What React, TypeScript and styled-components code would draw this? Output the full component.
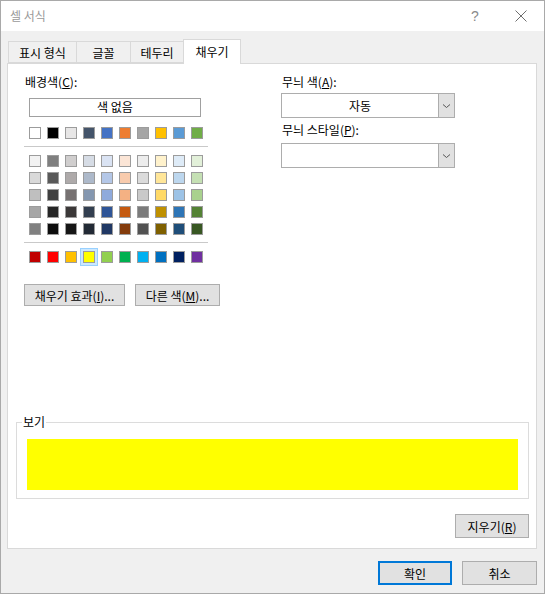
import React from 'react';
import styled, { createGlobalStyle } from 'styled-components';

const GlobalStyle = createGlobalStyle`
	html, body {
		margin: 0;
		padding: 0;
		background: #ffffff;
	}
	body {
		font-family: "Noto Sans CJK KR", "Noto Sans", "Liberation Sans", sans-serif;
		font-size: 12px;
		color: #000000;
	}
	* {
		box-sizing: border-box;
	}
`;

const Window = styled.div`
	width: 545px;
	height: 594px;
	border: 1px solid #a9a9a9;
	background: #f0f0f0;
	display: flex;
	flex-direction: column;
`;

const TitleBar = styled.div`
	height: 30px;
	background: #ffffff;
	display: flex;
	align-items: center;
	justify-content: space-between;
	padding-left: 9px;
`;

const Title = styled.span`
	color: #9a9a9a;
	font-size: 12px;
	line-height: 16px;
`;

const CaptionButtons = styled.div`
	display: flex;
	height: 100%;
`;

const CaptionButton = styled.div`
	width: 46px;
	height: 100%;
	display: flex;
	align-items: center;
	justify-content: center;
	color: #8a8a8a;
	font-family: "Liberation Sans", sans-serif;
	font-size: 14px;
`;

const Body = styled.div`
	padding: 0 7px 0 6px;
	display: flex;
	flex-direction: column;
`;

const TabStrip = styled.div`
	margin-top: 8px;
	margin-left: 1px;
	height: 24px;
	display: flex;
	align-items: flex-end;
`;

const Tab = styled.div<{ $w: number; $active?: boolean }>`
	position: relative;
	z-index: ${(p) => (p.$active ? 2 : 1)};
	width: ${(p) => p.$w}px;
	height: ${(p) => (p.$active ? 25 : 22)}px;
	margin-left: -1px;
	margin-bottom: ${(p) => (p.$active ? -1 : 0)}px;
	background: ${(p) => (p.$active ? '#ffffff' : '#f0f0f0')};
	border: 1px solid #d9d9d9;
	border-bottom: ${(p) => (p.$active ? 'none' : '1px solid #d9d9d9')};
	display: flex;
	align-items: center;
	justify-content: center;
	padding-bottom: ${(p) => (p.$active ? 2 : 0)}px;
	font-size: 12px;
	&:first-child {
		margin-left: 0;
	}
`;

const Panel = styled.div`
	position: relative;
	z-index: 0;
	height: 486px;
	background: #ffffff;
	border: 1px solid #d9d9d9;
	padding: 10px 7px 10px 8px;
	display: flex;
	flex-direction: column;
`;

const TopSection = styled.div`
	display: flex;
	padding-left: 8px;
	gap: 73px;
`;

const LeftColumn = styled.div`
	width: 184px;
	display: flex;
	flex-direction: column;
`;

const RightColumn = styled.div`
	width: 174px;
	display: flex;
	flex-direction: column;
`;

const Label = styled.div<{ $mt?: number }>`
	line-height: 16px;
	height: 16px;
	margin-top: ${(p) => p.$mt || 0}px;
	padding-left: 1px;
	white-space: nowrap;
`;

const NoColorBox = styled.div`
	margin: 8px 0 0 5px;
	width: 172px;
	height: 19px;
	border: 1px solid #a0a0a0;
	text-align: center;
	line-height: 16px;
`;

const SwatchGrid = styled.div<{ $mt: number }>`
	margin-top: ${(p) => p.$mt}px;
	margin-left: 5px;
	display: grid;
	grid-template-columns: repeat(10, 12px);
	grid-auto-rows: 12px;
	column-gap: 6px;
	row-gap: 5px;
`;

const Swatch = styled.div<{ $color: string; $selected?: boolean }>`
	width: 12px;
	height: 12px;
	background: ${(p) => p.$color};
	border: 1px solid #9c9c9c;
	box-shadow: ${(p) => (p.$selected ? '0 0 0 2px #cce8ff, 0 0 0 3px #99d1ff' : 'none')};
`;

const Separator = styled.div`
	margin-top: 7px;
	width: 184px;
	height: 1px;
	background: #c9c9c9;
`;

const ButtonRow = styled.div`
	margin-top: 21px;
	display: flex;
	gap: 10px;
`;

const Button = styled.div<{ $w: number; $h?: number; $default?: boolean }>`
	flex-shrink: 0;
	width: ${(p) => p.$w}px;
	height: ${(p) => p.$h || 22}px;
	background: #e1e1e1;
	border: ${(p) => (p.$default ? '2px solid #0078d7' : '1px solid #adadad')};
	display: flex;
	align-items: center;
	justify-content: center;
	white-space: nowrap;
	font-size: 12px;
`;

const Combo = styled.div<{ $mt: number }>`
	margin-top: ${(p) => p.$mt}px;
	width: 174px;
	height: 25px;
	border: 1px solid #adadad;
	display: flex;
	background: #ffffff;
`;

const ComboText = styled.div`
	flex: 1;
	display: flex;
	align-items: center;
	justify-content: center;
`;

const ComboButton = styled.div`
	width: 17px;
	height: 25px;
	background: #e1e1e1;
	border: 1px solid #adadad;
	margin: -1px -1px -1px 0;
	display: flex;
	align-items: center;
	justify-content: center;
`;

const LowerSection = styled.div`
	margin-top: auto;
	display: flex;
	flex-direction: column;
`;

const GroupBox = styled.div`
	position: relative;
	height: 77px;
	border: 1px solid #dcdcdc;
	padding: 16px 10px 0 10px;
`;

const GroupLegend = styled.span`
	position: absolute;
	top: -9px;
	left: 5px;
	padding: 0 1px;
	background: #ffffff;
	line-height: 16px;
`;

const Preview = styled.div<{ $color: string }>`
	height: 51px;
	background: ${(p) => p.$color};
`;

const ClearRow = styled.div`
	margin-top: 15px;
	display: flex;
	justify-content: flex-end;
`;

const Footer = styled.div`
	margin-top: 12px;
	display: flex;
	justify-content: flex-end;
	gap: 10px;
`;

const Chevron = () => (
	<svg width="9" height="6" viewBox="0 0 9 6">
		<path d="M1 1.5 L4.5 4.5 L8 1.5" fill="none" stroke="#555555" strokeWidth="1" />
	</svg>
);

const CloseIcon = () => (
	<svg width="12" height="12" viewBox="0 0 12 12">
		<path d="M0.5 0.5 L11.5 11.5 M11.5 0.5 L0.5 11.5" stroke="#6e6e6e" strokeWidth="1" />
	</svg>
);

const themeRow = ['#ffffff', '#000000', '#e7e6e6', '#44546a', '#4472c4', '#ed7d31', '#a5a5a5', '#ffc000', '#5b9bd5', '#70ad47'];

const shades = [
	['#f2f2f2', '#7f7f7f', '#d0cece', '#d6dce5', '#dae3f3', '#fbe5d6', '#ededed', '#fff2cc', '#deebf7', '#e2f0d9'],
	['#d9d9d9', '#595959', '#aeaaaa', '#adb9ca', '#b4c7e7', '#f8cbad', '#dbdbdb', '#ffe699', '#bdd7ee', '#c5e0b4'],
	['#bfbfbf', '#404040', '#767171', '#8497b0', '#8faadc', '#f4b183', '#c9c9c9', '#ffd966', '#9dc3e6', '#a9d18e'],
	['#a6a6a6', '#262626', '#3b3838', '#333f50', '#2f5597', '#c55a11', '#7b7b7b', '#bf9000', '#2e75b6', '#548235'],
	['#808080', '#0d0d0d', '#161616', '#222a35', '#203864', '#843c0c', '#525252', '#7f6000', '#1f4e79', '#385723'],
];

const standardRow = ['#c00000', '#ff0000', '#ffc000', '#ffff00', '#92d050', '#00b050', '#00b0f0', '#0070c0', '#002060', '#7030a0'];

const selectedColor = '#ffff00';

const App: React.FC = () => {
	return (
		<>
			<GlobalStyle />
			<Window>
				<TitleBar>
					<Title>셀 서식</Title>
					<CaptionButtons>
						<CaptionButton>?</CaptionButton>
						<CaptionButton>
							<CloseIcon />
						</CaptionButton>
					</CaptionButtons>
				</TitleBar>
				<Body>
					<TabStrip>
						<Tab $w={69}>표시 형식</Tab>
						<Tab $w={55}>글꼴</Tab>
						<Tab $w={54}>테두리</Tab>
						<Tab $w={58} $active>
							채우기
						</Tab>
					</TabStrip>
					<Panel>
						<TopSection>
							<LeftColumn>
								<Label>
									배경색(<u>C</u>):
								</Label>
								<NoColorBox>색 없음</NoColorBox>
								<SwatchGrid $mt={10}>
									{themeRow.map((c, i) => (
										<Swatch key={i} $color={c} />
									))}
								</SwatchGrid>
								<Separator />
								<SwatchGrid $mt={8}>
									{shades.flat().map((c, i) => (
										<Swatch key={i} $color={c} />
									))}
								</SwatchGrid>
								<Separator />
								<SwatchGrid $mt={8}>
									{standardRow.map((c, i) => (
										<Swatch key={i} $color={c} $selected={c === selectedColor} />
									))}
								</SwatchGrid>
								<ButtonRow>
									<Button $w={101}>
										채우기 효과(<u>I</u>)...
									</Button>
									<Button $w={85}>
										다른 색(<u>M</u>)...
									</Button>
								</ButtonRow>
							</LeftColumn>
							<RightColumn>
								<Label>
									무늬 색(<u>A</u>):
								</Label>
								<Combo $mt={3}>
									<ComboText>자동</ComboText>
									<ComboButton>
										<Chevron />
									</ComboButton>
								</Combo>
								<Label $mt={4}>
									무늬 스타일(<u>P</u>):
								</Label>
								<Combo $mt={5}>
									<ComboText />
									<ComboButton>
										<Chevron />
									</ComboButton>
								</Combo>
							</RightColumn>
						</TopSection>
						<LowerSection>
							<GroupBox>
								<GroupLegend>보기</GroupLegend>
								<Preview $color={selectedColor} />
							</GroupBox>
							<ClearRow>
								<Button $w={74} $h={24}>
									지우기(<u>R</u>)
								</Button>
							</ClearRow>
						</LowerSection>
					</Panel>
					<Footer>
						<Button $w={74} $h={24} $default>
							확인
						</Button>
						<Button $w={75} $h={24}>
							취소
						</Button>
					</Footer>
				</Body>
			</Window>
		</>
	);
};

export default App;
